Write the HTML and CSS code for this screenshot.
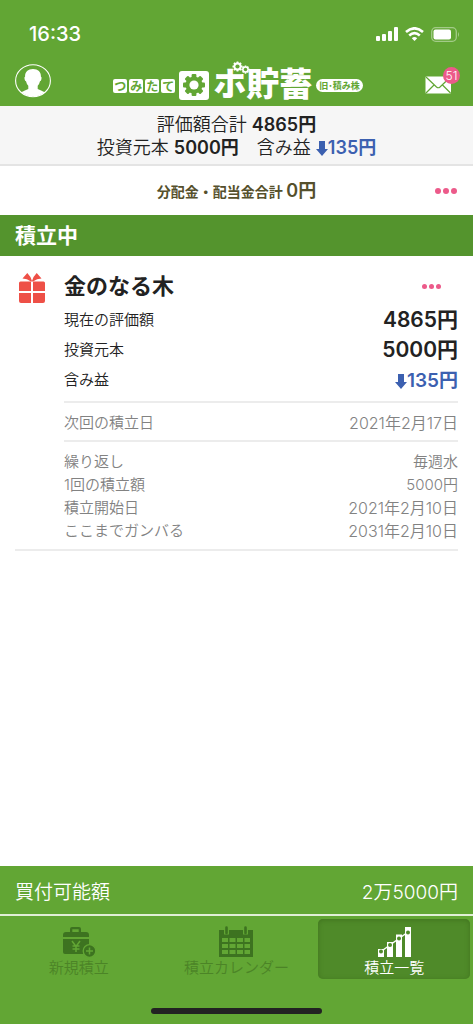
FILE: index.html
```html
<!DOCTYPE html>
<html lang="ja">
<head>
<meta charset="utf-8">
<meta name="viewport" content="width=device-width, initial-scale=1">
<title>つみたてロボ貯蓄</title>
<link rel="stylesheet" href="styles.css">
</head>
<body>
<svg class="defs" width="0" height="0" aria-hidden="true">
  <symbol id="gear" viewBox="0 0 24 24">
    <g fill="currentColor">
      <rect x="9.6" y="1" width="4.8" height="22" rx="1"/>
      <rect x="9.6" y="1" width="4.8" height="22" rx="1" transform="rotate(45 12 12)"/>
      <rect x="9.6" y="1" width="4.8" height="22" rx="1" transform="rotate(90 12 12)"/>
      <rect x="9.6" y="1" width="4.8" height="22" rx="1" transform="rotate(135 12 12)"/>
      <circle cx="12" cy="12" r="8.6"/>
    </g>
    <circle class="gear-hole" cx="12" cy="12" r="4.6"/>
  </symbol>
</svg>

<header class="top">
  <div class="status">
    <span class="clock">16:33</span>
    <div class="status-icons">
      <svg width="22" height="14" viewBox="0 0 22 14" fill="#fff" aria-hidden="true"><rect x="0" y="9" width="4" height="5" rx="1"/><rect x="6" y="7" width="4" height="7" rx="1"/><rect x="12" y="4" width="4" height="10" rx="1"/><rect x="18" y="0" width="4" height="14" rx="1"/></svg>
      <svg width="19" height="14" viewBox="0 0 19 14" fill="none" stroke="#fff" stroke-width="2.6" aria-hidden="true"><path d="M1 5Q9.500-2.400 18 5"/><path d="M4.200 8.400Q9.500 3.800 14.800 8.400"/><path d="M6.800 11.200Q9.500 9 12.200 11.200L9.500 14Z" fill="#fff" stroke="none"/></svg>
      <svg width="29" height="15" viewBox="0 0 29 15" aria-hidden="true"><rect x=".7" y=".7" width="24.600" height="13.600" rx="4" fill="none" stroke="#a3cb88" stroke-width="1.300"/><rect x="2.500" y="2.500" width="17.500" height="10" rx="2" fill="#fff"/><path d="M27 5q2 2.500 0 5z" fill="#a3cb88"/></svg>
    </div>
  </div>
  <div class="appbar">
    <button class="icon-button" type="button" aria-label="マイページ">
      <svg width="36" height="34" viewBox="0 0 36 34" aria-hidden="true"><ellipse cx="18" cy="16.700" rx="17.400" ry="16" fill="none" stroke="#fff" stroke-width="1.100"/><path d="M18 5C13 5 9.800 8 10.100 12.500Q9 13 9.600 15.200Q10 17 11 17.200Q11.600 20 13.300 21.700V25Q10 26.500 6.300 28.300Q11.500 32.500 18 32.500T29.700 28.300Q26 26.500 22.700 25V21.700Q24.400 20 25 17.200Q26 17 26.400 15.200Q27 13 25.900 12.500C26.200 8 23 5 18 5Z" fill="#fff"/></svg>
    </button>
    <h1 class="logo">
      <span class="tiles"><span>つ</span><span>み</span><span>た</span><span>て</span></span>
      <span class="gear-box"><svg width="24" height="24"><use href="#gear"/></svg></span>
      <span class="wordmark"><span class="ho">ホ<svg class="mini-gears" width="18" height="13" aria-hidden="true"><use href="#gear" width="11" height="11"/><use href="#gear" x="9" y="4" width="9" height="9"/></svg></span>貯蓄</span>
      <span class="former">旧･積み株</span>
    </h1>
    <button class="icon-button mail" type="button" aria-label="メッセージ 51件">
      <svg width="27" height="18" viewBox="0 0 27 18" aria-hidden="true"><rect x=".5" y=".5" width="25.500" height="17" rx="1" fill="#fff"/><path d="M1 1L11.500 11Q13.300 12.500 15 11L25.500 1M1 17L9 9M25.500 17L17.500 9" fill="none" stroke="#62a634" stroke-width="1.200"/></svg>
      <span class="badge">51</span>
    </button>
  </div>
</header>

<section class="summary" aria-label="合計">
  <p>評価額合計 <b>4865円</b></p>
  <p>投資元本 <b>5000円</b>　含み益 <b class="loss"><svg class="arrow" width="12" height="15" viewBox="0 0 12 15" aria-hidden="true"><path d="M3 0H9V8H12L6 15L0 8H3Z"/></svg>135円</b></p>
</section>

<section class="dividend">
  <p>分配金・配当金合計 <b>0円</b></p>
  <button class="more" type="button" aria-label="分配金の詳細"><i></i><i></i><i></i></button>
</section>

<main class="content">
  <h2 class="section-title">積立中</h2>
  <article class="card">
    <svg class="gift" width="26" height="32" viewBox="0 0 26 32" fill="#ee5047" aria-hidden="true"><path d="M0 11Q0 9.500 1.500 9.500H12V19H0ZM14 9.500H24.500Q26 9.500 26 11V19H14ZM0 21H12V31H2Q0 31 0 29ZM14 21H26V29Q26 31 24 31H14Z"/><path d="M12 9.500Q8 6.500 3.500 6.500L8.300 1Q11.500 4 13 9Q14.500 4 17.700 1L22.500 6.500Q18 6.500 14 9.500Z"/></svg>
    <div class="card-body">
      <div class="card-head">
        <h3>金のなる木</h3>
        <button class="more small" type="button" aria-label="金のなる木のメニュー"><i></i><i></i><i></i></button>
      </div>
      <dl class="amounts">
        <div><dt>現在の評価額</dt><dd>4865円</dd></div>
        <div><dt>投資元本</dt><dd>5000円</dd></div>
        <div><dt>含み益</dt><dd class="loss"><svg class="arrow" width="12" height="15" viewBox="0 0 12 15" aria-hidden="true"><path d="M3 0H9V8H12L6 15L0 8H3Z"/></svg>135円</dd></div>
      </dl>
      <dl class="next">
        <div><dt>次回の積立日</dt><dd>2021年2月17日</dd></div>
      </dl>
      <dl class="plan">
        <div><dt>繰り返し</dt><dd class="cycle">毎週水</dd></div>
        <div><dt>1回の積立額</dt><dd class="cycle">5000円</dd></div>
        <div><dt>積立開始日</dt><dd>2021年2月10日</dd></div>
        <div><dt>ここまでガンバる</dt><dd>2031年2月10日</dd></div>
      </dl>
    </div>
  </article>
</main>

<footer class="bottom">
  <div class="available"><span>買付可能額</span><span>2万5000円</span></div>
  <nav class="tabs">
    <a class="tab" href="#new">
      <svg width="34" height="32" viewBox="0 0 34 32" aria-hidden="true"><path d="M8 6V3Q8 1 10 1H17Q19 1 19 3V6H24Q27 6 27 9V11H1V9Q1 6 4 6ZM10.300 6H16.700V3.300H10.300Z" fill="#3d7320" fill-rule="evenodd"/><path d="M1 13H27V28H3Q1 28 1 26Z" fill="#3d7320"/><path d="M10 15L14 20.500L18 15M14 20.500V26M10.500 20H17.500M10.500 23H17.500" fill="none" stroke="#62a634" stroke-width="1.500"/><circle cx="27.500" cy="25" r="6.300" fill="#3d7320" stroke="#62a634" stroke-width="1.300"/><path d="M27.500 21.500V28.500M24 25H31" stroke="#62a634" stroke-width="1.500"/></svg>
      <span>新規積立</span>
    </a>
    <a class="tab" href="#calendar">
      <svg width="34" height="32" viewBox="0 0 34 32" aria-hidden="true"><path d="M0 4H34V31H0Z" fill="#3d7320"/><path d="M7.500 0V8.500M26.500 0V8.500" stroke="#62a634" stroke-width="5"/><path d="M7.500 1.500V7M26.500 1.500V7" stroke="#3d7320" stroke-width="2.600" stroke-linecap="round"/><g fill="#62a634"><path d="M3 12h6v4H3zM10.500 12h6v4h-6zM18 12h6v4h-6zM25.500 12h5.500v4h-5.500zM3 18h6v4H3zM10.500 18h6v4h-6zM18 18h6v4h-6zM25.500 18h5.500v4h-5.500zM3 24h6v4H3zM10.500 24h6v4h-6zM18 24h6v4h-6zM25.500 24h5.500v4h-5.500z"/></g></svg>
      <span>積立カレンダー</span>
    </a>
    <a class="tab active" href="#list" aria-current="page">
      <svg width="34" height="32" viewBox="0 0 34 32" aria-hidden="true"><path d="M1 23H7V31H1ZM10 16H16V31H10ZM19 8.500H25V31H19ZM28 1H34V31H28Z" fill="#fff"/><path d="M4 25.500L13 19L22 12.500L31 6" fill="none" stroke="#fff" stroke-width="1.500"/><g fill="#4f8a29"><circle cx="4" cy="25.500" r="2"/><circle cx="13" cy="19" r="2"/><circle cx="22" cy="12.500" r="2"/><circle cx="31" cy="6.500" r="2"/></g></svg>
      <span>積立一覧</span>
    </a>
  </nav>
  <div class="home-indicator"></div>
</footer>
</body>
</html>
```

FILE: styles.css
```css
* { box-sizing: border-box; }

body {
  margin: 0;
  min-height: 100vh;
  display: flex;
  flex-direction: column;
  background: #fff;
  color: #222;
  font-family: Inter, "Noto Sans CJK JP", sans-serif;
  font-size: 15px;
  font-weight: 350;
}

h1, h2, h3, p, dl, dd { margin: 0; }
svg { display: block; flex: none; }
button { padding: 0; border: 0; background: none; font: inherit; cursor: pointer; }
.defs { position: absolute; }

.top { background: #62a634; color: #fff; }

.status {
  height: 56px;
  padding: 12px 13px 0 29px;
  display: flex;
  align-items: center;
  justify-content: space-between;
}
.clock { font-size: 20px; font-weight: 500; }
.status-icons { display: flex; align-items: center; gap: 7px; }

.appbar {
  height: 50px;
  padding: 0 13px 0 15px;
  display: flex;
  align-items: center;
  justify-content: space-between;
}
.icon-button { position: relative; }
.mail { margin-top: 8px; padding-right: 8px; }
.badge {
  position: absolute;
  top: -9px;
  right: 0;
  width: 17px;
  height: 17px;
  border-radius: 50%;
  background: #ec5a8a;
  color: #fff;
  font-size: 12px;
  line-height: 17px;
  text-align: center;
}

.logo {
  display: flex;
  align-items: center;
  gap: 4px;
  padding-top: 8px;
  font-family: "Noto Sans CJK JP", sans-serif;
  font-weight: 900;
}
.tiles { display: flex; gap: 2px; padding-top: 2px; }
.tiles span {
  width: 14px;
  height: 14px;
  border-radius: 2px;
  background: #fff;
  color: #62a634;
  font-size: 12px;
  font-weight: 700;
  line-height: 13px;
  text-align: center;
}
.gear-box {
  width: 30px;
  height: 29px;
  display: grid;
  place-items: center;
  border-radius: 3px;
  background: #fff;
  fill: #fff;
  color: #62a634;
}
.wordmark {
  padding-bottom: 6px;
  font-size: 33px;
  line-height: 30px;
  white-space: nowrap;
}
.ho { position: relative; }
.mini-gears {
  position: absolute;
  top: 3px;
  right: -4px;
  fill: #62a634;
}
.former {
  padding: 0 3px;
  border-radius: 7px;
  background: #fff;
  color: #62a634;
  font-size: 9px;
  font-weight: 700;
  line-height: 13px;
  white-space: nowrap;
}

.summary {
  padding: 7px 0 5px;
  border-bottom: 2px solid #e4e4e4;
  background: #f6f6f6;
  font-size: 18px;
  line-height: 23px;
  text-align: center;
}
.summary b, .dividend b { font-weight: 600; }
.loss, .summary .loss { color: #3c60b0; }
.arrow { display: inline-block; fill: currentColor; vertical-align: -2px; }

.dividend {
  position: relative;
  height: 49px;
  display: flex;
  align-items: center;
  justify-content: center;
  color: #55502c;
  font-size: 14px;
  font-weight: 600;
}
.dividend b { font-size: 18px; }
.dividend p { padding-bottom: 3px; }
.dividend .more { position: absolute; right: 16px; }

.more { display: flex; gap: 2px; padding: 6px 0; }
.more i { width: 6px; height: 6px; border-radius: 50%; background: #ec5a8a; }
.small { margin-right: 17px; }
.small i { width: 5px; height: 5px; }

.content { flex: 1; }
.section-title {
  padding: 0 15px;
  background: #54942d;
  color: #fff;
  font-size: 21px;
  font-weight: 600;
  line-height: 41px;
}

.card {
  display: flex;
  align-items: flex-start;
  gap: 19px;
  margin: 0 15px;
  padding: 14px 0 8px;
  border-bottom: 2px solid #ececec;
}
.gift { margin: 2px 0 0 4px; }
.card-body { flex: 1; }
.card-head { height: 33px; display: flex; align-items: center; justify-content: space-between; }
.card-head h3 { font-size: 22px; font-weight: 700; line-height: 33px; }

dl div { display: flex; align-items: center; justify-content: space-between; }
.amounts { padding-bottom: 8px; }
.amounts div { height: 30px; }
.amounts dd { color: #222; font-size: 21px; font-weight: 600; }
.amounts .loss { color: #3c60b0; font-size: 19px; }
.next, .plan { color: #828282; }
.next dd, .plan dd { font-size: 16px; }
.plan .cycle { font-size: 15px; }
.next { border-top: 2px solid #ececec; border-bottom: 2px solid #ececec; }
.next div { height: 37px; }
.plan { padding-top: 7px; }
.plan div { height: 23px; }

.bottom { background: #62a634; color: #fff; }
.available {
  height: 50px;
  padding: 0 15px;
  display: flex;
  align-items: center;
  justify-content: space-between;
  border-bottom: 2px solid #e0efd6;
  font-size: 19px;
}
.tabs { display: grid; grid-template-columns: repeat(3, 1fr); padding: 3px 0; }
.tab {
  height: 60px;
  margin: 0 3px;
  padding-top: 7px;
  display: flex;
  flex-direction: column;
  align-items: center;
  border-radius: 5px;
  color: #4c8427;
  line-height: 20px;
  text-decoration: none;
}
.active {
  background: #4f8a29;
  box-shadow: inset 0 1px 5px #41741f;
  color: #fff;
}
.home-indicator {
  width: 36%;
  height: 6px;
  margin: 26px auto 10px;
  border-radius: 3px;
  background: #222;
}
```
